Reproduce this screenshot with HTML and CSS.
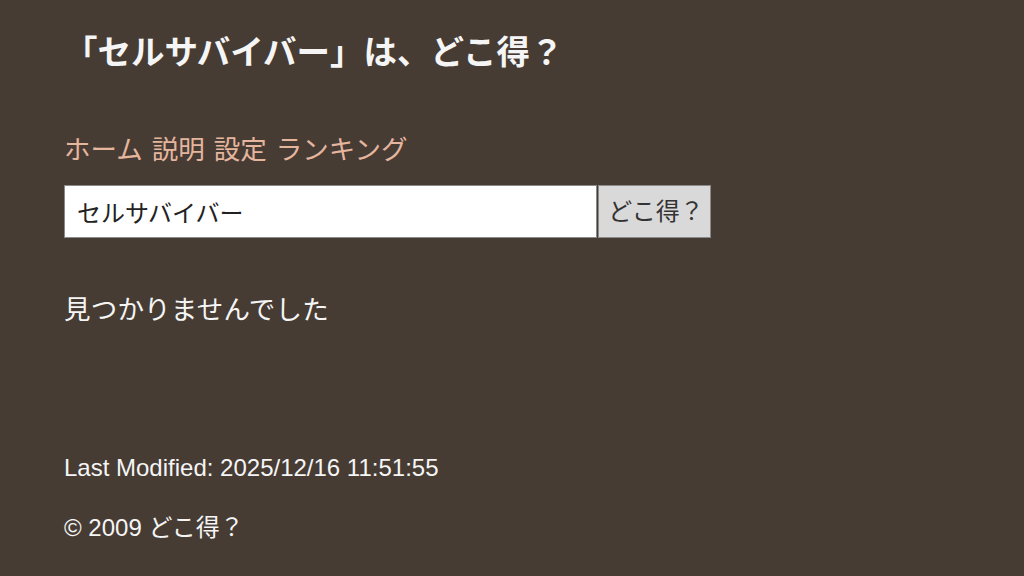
FILE: index.html
```html
<!DOCTYPE html>
<html lang="ja">
<head>
  <meta charset="UTF-8">
  <title>どこ得？</title>
  <link rel="stylesheet" href="styles.css">
</head>
<body>
  <h1>「セルサバイバー」は、どこ得？</h1>
  <nav class="menu">
    <a href="#">ホーム</a>
    <a href="#">説明</a>
    <a href="#">設定</a>
    <a href="#">ランキング</a>
  </nav>
  <form class="search" onsubmit="return false">
    <input type="text" class="search-box" value="セルサバイバー">
    <button type="submit" class="search-btn">どこ得？</button>
  </form>
  <p class="result">見つかりませんでした</p>
  <footer>
    <p class="modified">Last Modified: 2025/12/16 11:51:55</p>
    <p class="copy">© 2009 どこ得？</p>
  </footer>
</body>
</html>
```

FILE: styles.css
```css
body {
  margin: 0;
  padding: 0 64px;
  background: #463c34;
  color: #f5f5f5;
  font-family: "Liberation Sans", "Noto Sans CJK JP", sans-serif;
  font-size: 24px;
  line-height: 1.4;
}

h1 {
  font-size: 33.5px;
  font-weight: bold;
  line-height: 47px;
  margin: 28.5px 0 0;
}

.menu {
  margin-top: 56px;
  display: flex;
  gap: 9px;
  font-size: 26.5px;
  line-height: 37px;
}

.menu a {
  color: #e5b59e;
  text-decoration: none;
}

.search {
  display: flex;
  margin-top: 16.5px;
}

.search-box {
  width: 533px;
  height: 53px;
  box-sizing: border-box;
  border: 1px solid #8a8a8a;
  padding: 0 12px;
  font: inherit;
  color: #222;
  background: #fff;
}

.search-btn {
  width: 113px;
  height: 53px;
  box-sizing: border-box;
  border: 1px solid #8a8a8a;
  background: #d9d9d9;
  color: #333;
  font: inherit;
  padding: 0 0 0 3px;
  margin-left: 1px;
}

.result {
  margin: 53.5px 0 0;
  font-size: 26.5px;
  line-height: 37px;
  letter-spacing: 0.2px;
}

footer {
  margin-top: 122.5px;
}

footer p {
  margin: 0;
}

.copy {
  margin-top: 26px !important;
}
```
